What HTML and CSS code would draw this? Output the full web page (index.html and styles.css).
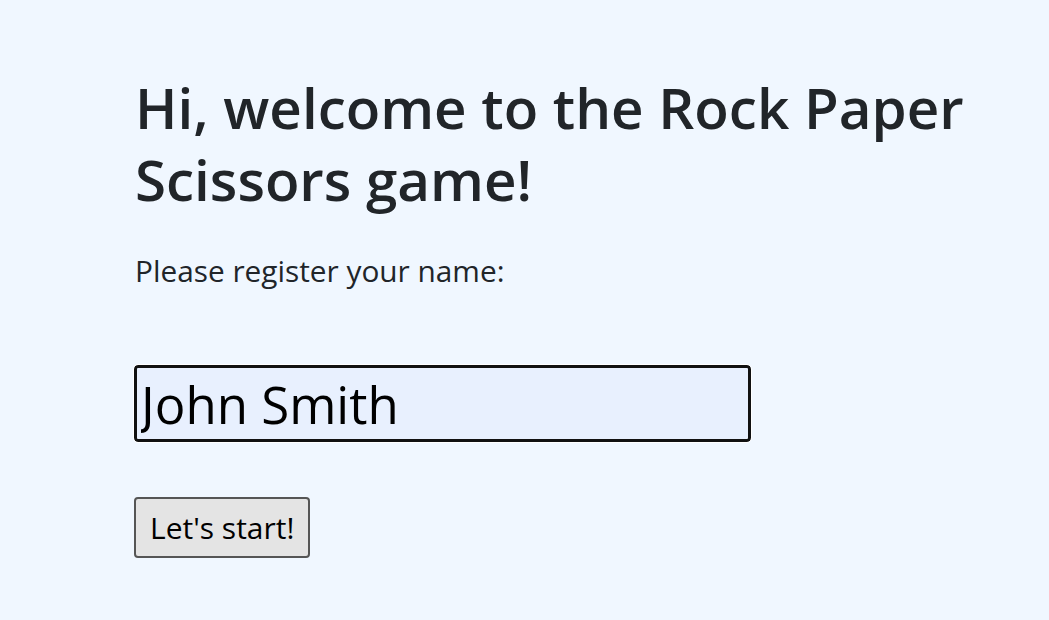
FILE: index.html
```html
<!DOCTYPE html>
<html lang="en">
<head>
<meta charset="utf-8">
<title>Rock Paper Scissors</title>
<link rel="stylesheet" href="styles.css">
</head>
<body>
<main class="page">
  <h1 class="title">Hi, welcome to the Rock Paper Scissors game!</h1>
  <p class="lead">Please register your name:</p>
  <form class="register">
    <input class="name-input" type="text" value="John Smith" aria-label="Name">
    <button class="start-btn" type="button">Let's start!</button>
  </form>
</main>
</body>
</html>
```
FILE: styles.css
```css
html, body {
  margin: 0;
  padding: 0;
  background: #f0f7ff;
}

body {
  font-family: "Open Sans", "Noto Sans", sans-serif;
  color: #212529;
}

.page {
  width: 860px;
  padding: 72px 0 0 135px;
}

.title {
  margin: 0;
  font-size: 56.5px;
  font-weight: 600;
  line-height: 72px;
}

.lead {
  margin: 35px 0 0;
  font-size: 29.8px;
  line-height: 40px;
  font-weight: 400;
}

.register {
  display: flex;
  flex-direction: column;
  align-items: flex-start;
  gap: 55px;
  margin-top: 74px;
}

.name-input {
  box-sizing: border-box;
  width: 617px;
  height: 77px;
  margin: 0 0 0 -1px;
  padding: 0 4px;
  border: 3px solid #111;
  border-radius: 4px;
  background: #e8f0fe;
  font-family: "Open Sans", "Noto Sans", sans-serif;
  font-size: 51px;
  color: #000;
  outline: 1px solid #fff;
}

.start-btn {
  box-sizing: border-box;
  height: 61px;
  margin-left: -1px;
  padding: 0 14px;
  border: 2px solid #555;
  border-radius: 4px;
  background: #e4e4e4;
  font-family: "Open Sans", "Noto Sans", sans-serif;
  font-size: 30px;
  color: #000;
}
```
